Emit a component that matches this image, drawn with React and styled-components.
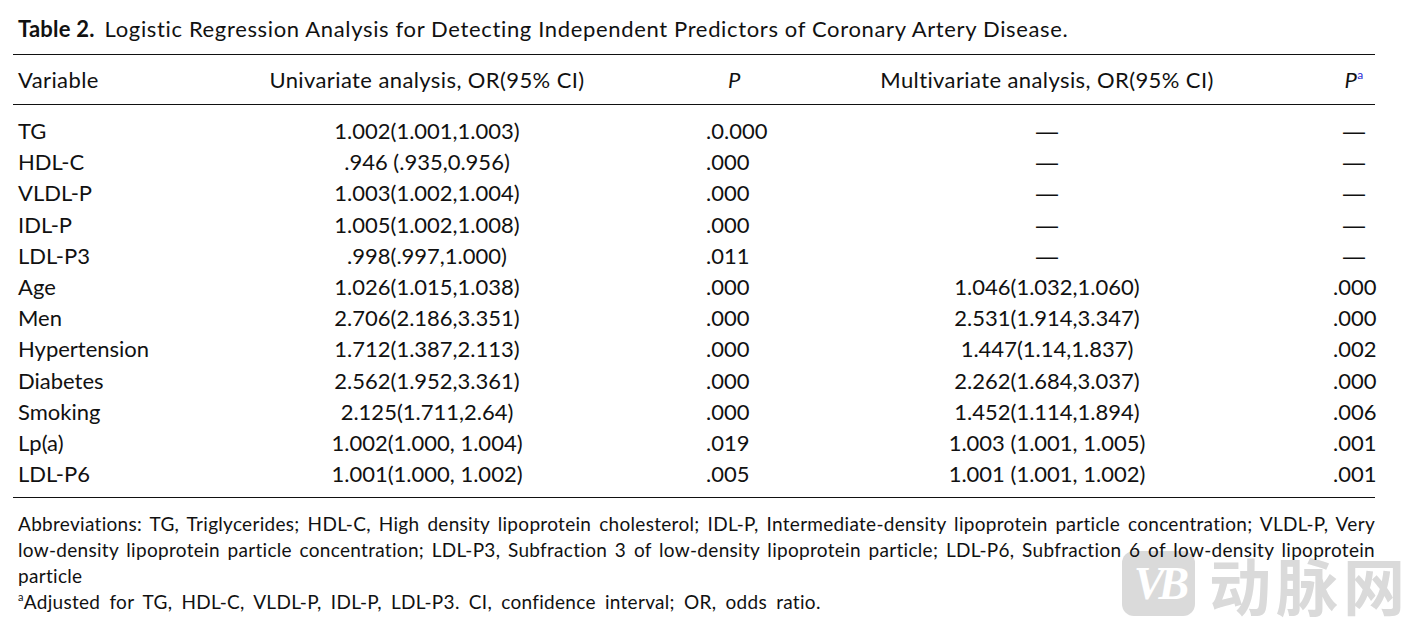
import React from "react";
import styled, { createGlobalStyle } from "styled-components";

const GlobalStyle = createGlobalStyle`
  html, body {
    margin: 0;
    padding: 0;
    background: #ffffff;
  }
  body {
    font-family: Lato, "Noto Sans", sans-serif;
    color: #111111;
  }
`;

const Page = styled.div`
  position: relative;
  width: 1415px;
  height: 627px;
  overflow: hidden;
  padding: 15px 40px 0 13px;
  box-sizing: border-box;
`;

const Caption = styled.div`
  font-size: 22px;
  letter-spacing: 0.65px;
  line-height: 28px;
  padding-left: 5px;
  white-space: nowrap;
  margin-bottom: 11px;
`;

const CaptionLabel = styled.b`
  font-weight: 700;
  letter-spacing: 0.2px;
  margin-right: 10px;
`;

const Table = styled.div`
  display: grid;
  grid-template-columns: 237px 354px 256px 374px 141px;
  border-top: 1.5px solid #111;
  border-bottom: 1.5px solid #111;
  font-size: 22px;
`;

const HeadRow = styled.div`
  display: contents;
`;

const Cell = styled.div`
  height: ${(p) => (p.$head ? "49px" : "31.2px")};
  line-height: ${(p) => (p.$head ? "49px" : "31.2px")};
  white-space: nowrap;
  letter-spacing: ${(p) => (p.$head ? "0.4px" : "0")};
  text-align: ${(p) => p.$align || "left"};
  padding-left: ${(p) => p.$pad || 0}px;
  padding-top: ${(p) => (p.$first ? 10 : 0)}px;
  padding-bottom: ${(p) => (p.$last ? 8 : 0)}px;
  border-bottom: ${(p) => (p.$head ? "1.5px solid #111" : "none")};
`;

const Dash = styled.span`
  font-family: "Liberation Sans", sans-serif;
  font-size: 22px;
`;

const Italic = styled.i`
  font-style: italic;
`;

const Sup = styled.sup`
  font-size: 12px;
  color: #2b2bd6;
  vertical-align: 9px;
  line-height: 0;
`;

const Notes = styled.div`
  position: relative;
  z-index: 1;
  padding: 13px 0 0 5px;
  font-size: 19px;
  letter-spacing: 0.3px;
  line-height: 26px;
`;

const NoteLine = styled.div`
  white-space: ${(p) => (p.$justify ? "normal" : "nowrap")};
  text-align: ${(p) => (p.$justify ? "justify" : "left")};
  text-align-last: ${(p) => (p.$justify ? "justify" : "left")};
  word-spacing: ${(p) => p.$words || 0}px;
`;

const NoteSup = styled.sup`
  font-size: 11px;
  vertical-align: 8px;
  line-height: 0;
`;

const Watermark = styled.div`
  position: absolute;
  z-index: 0;
  left: 1122px;
  top: 551px;
  display: flex;
  align-items: center;
  gap: 14px;
  pointer-events: none;
`;

const Badge = styled.div`
  width: 73px;
  height: 65px;
  border-radius: 12px;
  background: #dadada;
  display: flex;
  align-items: center;
  justify-content: center;
  color: #ffffff;
  font-family: "Liberation Serif", serif;
  font-weight: 700;
  font-style: italic;
  font-size: 46px;
  letter-spacing: -6px;
`;

const WatermarkText = styled.div`
  font-family: "Noto Sans CJK SC", sans-serif;
  font-weight: 700;
  font-size: 62px;
  line-height: 64px;
  color: #dadada;
  letter-spacing: 5px;
`;

const DASH = "—";

const rows = [
  ["TG", "1.002(1.001,1.003)", ".0.000", DASH, DASH],
  ["HDL-C", ".946 (.935,0.956)", ".000", DASH, DASH],
  ["VLDL-P", "1.003(1.002,1.004)", ".000", DASH, DASH],
  ["IDL-P", "1.005(1.002,1.008)", ".000", DASH, DASH],
  ["LDL-P3", ".998(.997,1.000)", ".011", DASH, DASH],
  ["Age", "1.026(1.015,1.038)", ".000", "1.046(1.032,1.060)", ".000"],
  ["Men", "2.706(2.186,3.351)", ".000", "2.531(1.914,3.347)", ".000"],
  ["Hypertension", "1.712(1.387,2.113)", ".000", "1.447(1.14,1.837)", ".002"],
  ["Diabetes", "2.562(1.952,3.361)", ".000", "2.262(1.684,3.037)", ".000"],
  ["Smoking", "2.125(1.711,2.64)", ".000", "1.452(1.114,1.894)", ".006"],
  ["Lp(a)", "1.002(1.000, 1.004)", ".019", "1.003 (1.001, 1.005)", ".001"],
  ["LDL-P6", "1.001(1.000, 1.002)", ".005", "1.001 (1.001, 1.002)", ".001"],
];

const show = (v) => (v === DASH ? <Dash>{v}</Dash> : v);

export default function App() {
  return (
    <Page>
      <GlobalStyle />
      <Caption>
        <CaptionLabel>Table 2.</CaptionLabel>
        Logistic Regression Analysis for Detecting Independent Predictors of Coronary Artery Disease.
      </Caption>

      <Table>
        <HeadRow>
          <Cell $head $pad={5}>Variable</Cell>
          <Cell $head $align="center">Univariate analysis, OR(95% CI)</Cell>
          <Cell $head $pad={124}><Italic>P</Italic></Cell>
          <Cell $head $align="center">Multivariate analysis, OR(95% CI)</Cell>
          <Cell $head $align="center" $pad={99}>
            <Italic>P</Italic><Sup>a</Sup>
          </Cell>
        </HeadRow>
        {rows.map((r, i) => {
          const first = i === 0;
          const last = i === rows.length - 1;
          return (
            <React.Fragment key={r[0]}>
              <Cell $first={first} $last={last} $pad={5}>{r[0]}</Cell>
              <Cell $first={first} $last={last} $align="center">{r[1]}</Cell>
              <Cell $first={first} $last={last} $pad={102}>{r[2]}</Cell>
              <Cell $first={first} $last={last} $align="center">{show(r[3])}</Cell>
              <Cell $first={first} $last={last} $align="center" $pad={99}>{show(r[4])}</Cell>
            </React.Fragment>
          );
        })}
      </Table>

      <Notes>
        <NoteLine $justify>
          Abbreviations: TG, Triglycerides; HDL-C, High density lipoprotein cholesterol; IDL-P, Intermediate-density
          lipoprotein particle concentration; VLDL-P, Very
        </NoteLine>
        <NoteLine $justify>
          low-density lipoprotein particle concentration; LDL-P3, Subfraction 3 of low-density lipoprotein particle;
          LDL-P6, Subfraction 6 of low-density lipoprotein
        </NoteLine>
        <NoteLine>particle</NoteLine>
        <NoteLine $words={4}>
          <NoteSup>a</NoteSup>Adjusted for TG, HDL-C, VLDL-P, IDL-P, LDL-P3. CI, confidence interval; OR, odds ratio.
        </NoteLine>
      </Notes>

      <Watermark>
        <Badge>VB</Badge>
        <WatermarkText>动脉网</WatermarkText>
      </Watermark>
    </Page>
  );
}
